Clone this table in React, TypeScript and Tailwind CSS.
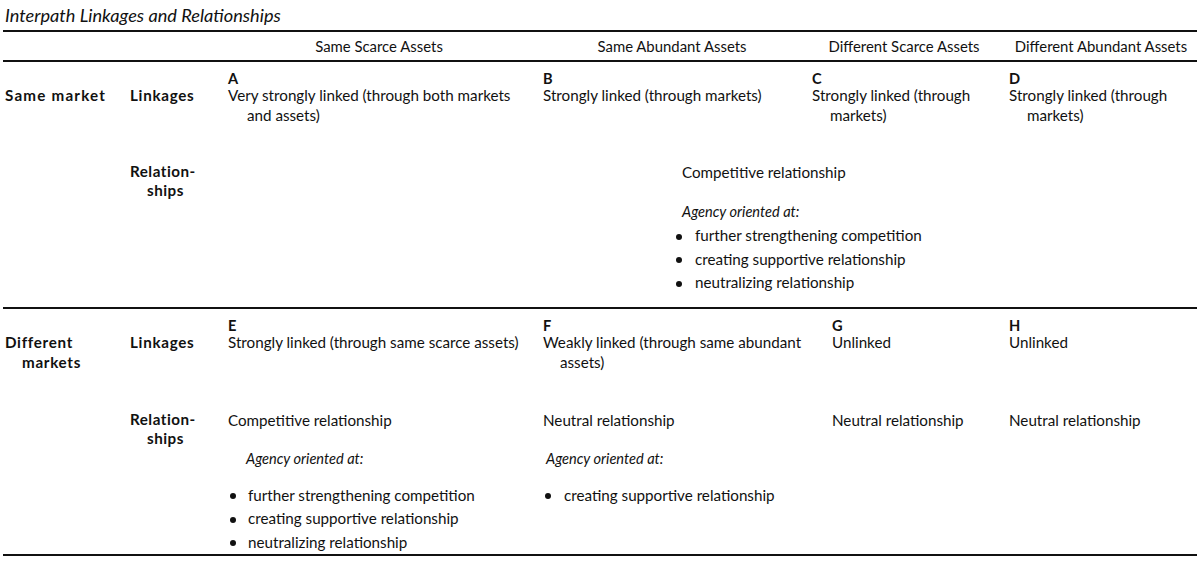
import React from 'react';

const cols = 'grid grid-cols-[125px_98px_315px_269px_197px_188px]';

function Letter({ children }: { children: React.ReactNode }) {
  return <div className="font-bold text-[14.6px] leading-[13px]">{children}</div>;
}

function Bullets({ items, gap }: { items: string[]; gap: string }) {
  return (
    <ul className="leading-[23.5px]">
      {items.map((item) => (
        <li key={item} className="flex items-center">
          <span className="w-[6px] h-[6px] rounded-full bg-[#111] translate-y-[1px] shrink-0" />
          <span className={gap}>{item}</span>
        </li>
      ))}
    </ul>
  );
}

const threeAims = [
  'further strengthening competition',
  'creating supportive relationship',
  'neutralizing relationship',
];

export default function App() {
  return (
    <div className="w-[1200px] h-[564px] bg-white px-[3px] text-[#111] text-[15.2px] whitespace-nowrap font-['Lato','Open_Sans',sans-serif] overflow-hidden">
      {/* Title */}
      <div className="h-[32px] border-b-2 border-[#111] pt-[5px] pl-[2px] italic text-[18.2px] leading-[20px]">
        Interpath Linkages and Relationships
      </div>

      {/* Column headers */}
      <div className={`${cols} h-[30px] border-b-2 border-[#111] pt-[4px] text-[14.9px] leading-[20px]`}>
        <div />
        <div />
        <div className="text-center pr-[9px]">Same Scarce Assets</div>
        <div className="text-center pr-[7px]">Same Abundant Assets</div>
        <div className="text-center pr-[9px]">Different Scarce Assets</div>
        <div className="text-center">Different Abundant Assets</div>
      </div>

      {/* Same market */}
      <div className="h-[247px] border-b-2 border-[#111] flex flex-col leading-[20px]">
        <div className={`${cols} h-[100px]`}>
          <div className="pt-[23px] pl-[2px] font-bold tracking-[1.2px]">Same market</div>
          <div className="pt-[23px] pl-[2px] font-bold tracking-[0.7px]">Linkages</div>
          <div className="pt-[10px] pl-[2px]">
            <Letter>A</Letter>
            <div>Very strongly linked (through both markets</div>
            <div className="pl-[19px]">and assets)</div>
          </div>
          <div className="pt-[10px] pl-[2px]">
            <Letter>B</Letter>
            <div>Strongly linked (through markets)</div>
          </div>
          <div className="pt-[10px] pl-[2px]">
            <Letter>C</Letter>
            <div>Strongly linked (through</div>
            <div className="pl-[18px]">markets)</div>
          </div>
          <div className="pt-[10px] pl-[2px]">
            <Letter>D</Letter>
            <div>Strongly linked (through</div>
            <div className="pl-[18px]">markets)</div>
          </div>
        </div>
        <div className={`${cols} flex-1`}>
          <div />
          <div className="pl-[2px] font-bold tracking-[0.5px] leading-[19px]">
            <div>Relation-</div>
            <div className="pl-[17px]">ships</div>
          </div>
          <div />
          <div className="col-span-3 pl-[141px]">
            <div>Competitive relationship</div>
            <div className="mt-[20px] italic text-[14.6px]">Agency oriented at:</div>
            <div className="mt-[2px] -ml-[6px]">
              <Bullets items={threeAims} gap="ml-[13px]" />
            </div>
          </div>
        </div>
      </div>

      {/* Different markets */}
      <div className="h-[247px] border-b-2 border-[#111] flex flex-col leading-[20px]">
        <div className={`${cols} h-[101px]`}>
          <div className="pt-[23px] pl-[2px] font-bold tracking-[0.7px]">
            <div>Different</div>
            <div className="pl-[17px]">markets</div>
          </div>
          <div className="pt-[23px] pl-[2px] font-bold tracking-[0.7px]">Linkages</div>
          <div className="pt-[10px] pl-[2px]">
            <Letter>E</Letter>
            <div>Strongly linked (through same scarce assets)</div>
          </div>
          <div className="pt-[10px] pl-[2px]">
            <Letter>F</Letter>
            <div>Weakly linked (through same abundant</div>
            <div className="pl-[17px]">assets)</div>
          </div>
          <div className="pt-[10px] pl-[22px]">
            <Letter>G</Letter>
            <div>Unlinked</div>
          </div>
          <div className="pt-[10px] pl-[2px]">
            <Letter>H</Letter>
            <div>Unlinked</div>
          </div>
        </div>
        <div className={`${cols} flex-1`}>
          <div />
          <div className="pl-[2px] font-bold tracking-[0.5px] leading-[19px]">
            <div>Relation-</div>
            <div className="pl-[17px]">ships</div>
          </div>
          <div className="pl-[2px]">
            <div>Competitive relationship</div>
            <div className="mt-[19px] pl-[18px] italic text-[14.6px]">Agency oriented at:</div>
            <div className="mt-[15px] pl-[2px]">
              <Bullets items={threeAims} gap="ml-[12px]" />
            </div>
          </div>
          <div className="pl-[2px]">
            <div>Neutral relationship</div>
            <div className="mt-[19px] pl-[3px] italic text-[14.6px]">Agency oriented at:</div>
            <div className="mt-[15px] pl-[2px]">
              <Bullets items={['creating supportive relationship']} gap="ml-[13px]" />
            </div>
          </div>
          <div className="pl-[22px]">Neutral relationship</div>
          <div className="pl-[2px]">Neutral relationship</div>
        </div>
      </div>
    </div>
  );
}
